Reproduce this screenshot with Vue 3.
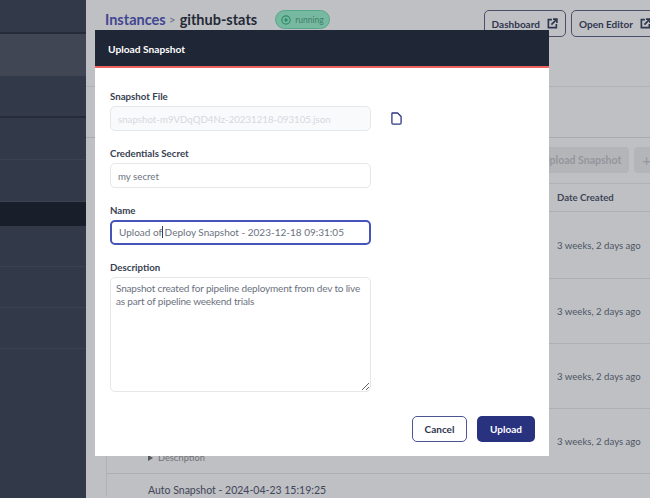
<script setup>
const navRows = [
  { h: 34, kind: 'plain edge' },
  { h: 42, kind: 'light' },
  { h: 42, kind: 'plain edge2' },
  { h: 42, kind: 'plain' },
  { h: 42, kind: 'plain' },
  { h: 24, kind: 'active' },
  { h: 41, kind: 'plain' },
  { h: 41, kind: 'plain' },
  { h: 41, kind: 'plain' }
]
const dates = ['3 weeks, 2 days ago', '3 weeks, 2 days ago', '3 weeks, 2 days ago']
</script>

<template>
  <div class="page">
    <aside class="sidebar">
      <div v-for="(row, i) in navRows" :key="i" class="nav-row" :class="row.kind" :style="{ height: row.h + 'px' }"></div>
    </aside>

    <main class="main">
      <header class="top">
        <div class="crumbs">
          <span class="crumb-link">Instances</span>
          <span class="crumb-sep">&gt;</span>
          <span class="crumb-name">github-stats</span>
          <span class="status">
            <svg width="10" height="10" viewBox="0 0 12 12" fill="none">
              <circle cx="6" cy="6" r="5" stroke="#2e8b69" stroke-width="1.400" />
              <circle cx="6" cy="6" r="2" fill="#2e8b69" />
            </svg>
            running
          </span>
        </div>
        <div class="top-actions">
          <button class="outline-btn">
            Dashboard
            <svg width="11" height="11" viewBox="0 0 20 20" fill="none" stroke="currentColor" stroke-width="3">
              <path d="M9 3H2.500v14.500H17V11" />
              <path d="M8 12 17 3M11 2h7v7" />
            </svg>
          </button>
          <button class="outline-btn">
            Open Editor
            <svg width="11" height="11" viewBox="0 0 20 20" fill="none" stroke="currentColor" stroke-width="3">
              <path d="M9 3H2.500v14.500H17V11" />
              <path d="M8 12 17 3M11 2h7v7" />
            </svg>
          </button>
        </div>
      </header>

      <div class="tabs-band"></div>

      <div class="toolbar">
        <span class="ghost-btn">Upload Snapshot</span>
        <span class="ghost-btn plus">+</span>
      </div>

      <section class="table">
        <div class="thead"><span class="date-col">Date Created</span></div>
        <div v-for="(date, i) in dates" :key="i" class="trow" :class="{ first: i === 0 }">
          <span class="date-col">{{ date }}</span>
        </div>
        <div class="trow">
          <div class="desc-toggle"><span class="tri"></span>Description</div>
          <span class="date-col">3 weeks, 2 days ago</span>
        </div>
        <div class="tlast">Auto Snapshot - 2024-04-23 15:19:25</div>
      </section>
    </main>

    <div class="modal">
      <div class="modal-head">Upload Snapshot</div>
      <form class="modal-body" @submit.prevent>
        <label class="field">
          <span class="label">Snapshot File</span>
          <span class="file-row">
            <input class="input disabled" disabled value="snapshot-m9VDqQD4Nz-20231218-093105.json" />
            <svg class="file-icon" width="11" height="13" viewBox="0 0 12 14" fill="none" stroke="#2d3580" stroke-width="1.400" stroke-linejoin="round">
              <path d="M1.600 1h5.600L11 4.800v7a1.300 1.300 0 0 1-1.300 1.300H2.300A1.300 1.300 0 0 1 1 11.800V1.600A.6.6 0 0 1 1.600 1Z" />
            </svg>
          </span>
        </label>
        <label class="field">
          <span class="label">Credentials Secret</span>
          <input class="input" value="my secret" />
        </label>
        <label class="field">
          <span class="label">Name</span>
          <span class="input focused">Upload of<i class="caret"></i> Deploy Snapshot - 2023-12-18 09:31:05</span>
        </label>
        <label class="field">
          <span class="label">Description</span>
          <textarea class="textarea" spellcheck="false">Snapshot created for pipeline deployment from dev to live as part of pipeline weekend trials</textarea>
        </label>
        <div class="actions">
          <button class="btn cancel" type="button">Cancel</button>
          <button class="btn upload" type="submit">Upload</button>
        </div>
      </form>
    </div>
  </div>
</template>

<style>
html, body { margin: 0; overflow: hidden; }
</style>

<style scoped>
.page {
  position: relative;
  display: flex;
  width: 650px;
  height: 498px;
  overflow: hidden;
  background: #bfc0c3;
  font-family: Lato, "Liberation Sans", sans-serif;
  color: #4b5563;
}
.sidebar {
  flex: 0 0 86px;
  background: #323949;
  display: flex;
  flex-direction: column;
}
.nav-row { flex: none; box-sizing: border-box; border-bottom: 1px solid #3a4152; }
.nav-row.edge { border-bottom: 2px solid #252b3a; }
.nav-row.edge2 { border-bottom: 2px solid #252b3a; }
.nav-row.light { background: #404654; border-bottom: 0; }
.nav-row.active { background: #191e2b; border-bottom: 0; }
.main { flex: 1; min-width: 0; display: flex; flex-direction: column; }
.main > * { flex: none; }
.top {
  display: flex;
  justify-content: space-between;
  align-items: flex-start;
  height: 87px;
  box-sizing: border-box;
  padding: 10px 0 0 19px;
  border-bottom: 1px solid #b1b2b6;
  white-space: nowrap;
}
.crumbs { display: flex; align-items: center; height: 19px; }
.crumb-link { font-size: 14.500px; font-weight: 700; color: #3f4691; }
.crumb-sep { margin: 0 4px 0 3px; font-size: 12px; color: #6b7280; }
.crumb-name { font-size: 14.500px; font-weight: 700; color: #1f2937; }
.status {
  display: inline-flex;
  align-items: center;
  gap: 4px;
  margin-left: 18px;
  height: 19px;
  box-sizing: border-box;
  padding: 0 5px;
  border: 1px solid #55a98a;
  border-radius: 10px;
  background: #77b9a0;
  color: #3d7f68;
  font-size: 8.500px;
}
.top-actions { display: flex; gap: 5px; margin-right: -9px; }
.outline-btn {
  display: inline-flex;
  align-items: center;
  gap: 7px;
  height: 27px;
  padding: 0 7px;
  box-sizing: border-box;
  border: 1px solid #4a5068;
  border-radius: 5px;
  background: transparent;
  color: #2f3650;
  font: 700 10px Lato, "Liberation Sans", sans-serif;
}
.tabs-band { height: 51px; box-sizing: border-box; border-bottom: 1px solid #a9aab0; }
.toolbar {
  display: flex;
  justify-content: flex-end;
  gap: 5px;
  height: 45px;
  box-sizing: border-box;
  padding-top: 9px;
  margin-right: -9px;
}
.ghost-btn {
  display: inline-flex;
  align-items: center;
  height: 26px;
  padding: 0 8px;
  border-radius: 4px;
  background: #b3b5b9;
  color: #94969c;
  font-size: 10.500px;
  font-weight: 700;
}
.ghost-btn.plus { font-size: 15px; font-weight: 400; }
.table { margin-left: 20px; border-left: 1px solid #b1b2b6; border-top: 1px solid #b1b2b6; }
.thead {
  display: flex;
  justify-content: flex-end;
  align-items: center;
  height: 28px;
  box-sizing: border-box;
  padding-right: 9px;
  border-bottom: 1px solid #aeafb3;
  color: #40465a;
  font-weight: 700;
}
.trow {
  display: flex;
  justify-content: flex-end;
  align-items: center;
  box-sizing: border-box;
  height: 65px;
  padding-right: 9px;
  border-bottom: 1px solid #aeafb3;
}
.trow.first { height: 67px; }
.date-col { width: 84px; font-size: 9.600px; white-space: nowrap; }
.tlast { padding: 10px 0 0 41px; font-size: 10.500px; color: #40465a; white-space: nowrap; }
.desc-toggle {
  align-self: flex-end;
  display: flex;
  align-items: center;
  gap: 5px;
  margin: 0 auto 10px 41px;
  font-size: 9.200px;
  color: #6f7278;
}
.tri { width: 0; height: 0; border-left: 5px solid #55585f; border-top: 3px solid transparent; border-bottom: 3px solid transparent; }

.modal {
  position: absolute;
  left: 95px;
  top: 30px;
  width: 454px;
  height: 426px;
  background: #fff;
  display: flex;
  flex-direction: column;
}
.modal-head {
  box-sizing: border-box;
  height: 38px;
  display: flex;
  align-items: center;
  padding: 2px 0 0 13px;
  background: #1f2635;
  border-bottom: 2px solid #f0625f;
  color: #fff;
  font-size: 10.200px;
  font-weight: 700;
}
.modal-body { display: flex; flex-direction: column; padding: 20px 14px 0 15px; flex: 1; }
.field { display: flex; flex-direction: column; margin-bottom: 14px; }
.label { height: 16px; font-size: 9.700px; line-height: 16px; font-weight: 700; color: #374151; margin-bottom: 2px; }
.file-row { display: flex; align-items: center; gap: 20px; }
.input {
  box-sizing: border-box;
  width: 261px;
  height: 25px;
  padding: 0 7px;
  display: block;
  border: 1px solid #e5e7eb;
  border-radius: 5px;
  background: #fff;
  color: #6b7280;
  font: 9.700px/23px Lato, "Liberation Sans", sans-serif;
  outline: 0;
  white-space: nowrap;
}
.input.disabled { background: #f9fafb; color: #d5d9de; }
.input.focused { border: 2px solid #4554b8; font-size: 10px; line-height: 21px; }
.caret { display: inline-block; width: 1px; height: 12px; background: #374151; vertical-align: -2px; margin-right: -1px; }
.file-icon { flex: none; }
.textarea {
  box-sizing: border-box;
  width: 261px;
  height: 115px;
  padding: 4px 5px;
  border: 1px solid #e5e7eb;
  border-radius: 5px;
  color: #6b7280;
  font: 10px/13px Lato, "Liberation Sans", sans-serif;
  letter-spacing: -0.170px;
  outline: 0;
  resize: vertical;
}
.actions { display: flex; justify-content: flex-end; gap: 10px; margin-top: 10px; }
.btn {
  box-sizing: border-box;
  height: 26px;
  border-radius: 5px;
  font: 700 10px Lato, "Liberation Sans", sans-serif;
}
.cancel { width: 55px; border: 1px solid #4a5591; background: #fff; color: #2f3650; }
.upload { width: 58px; border: 0; background: #29327f; color: #fff; }
</style>
